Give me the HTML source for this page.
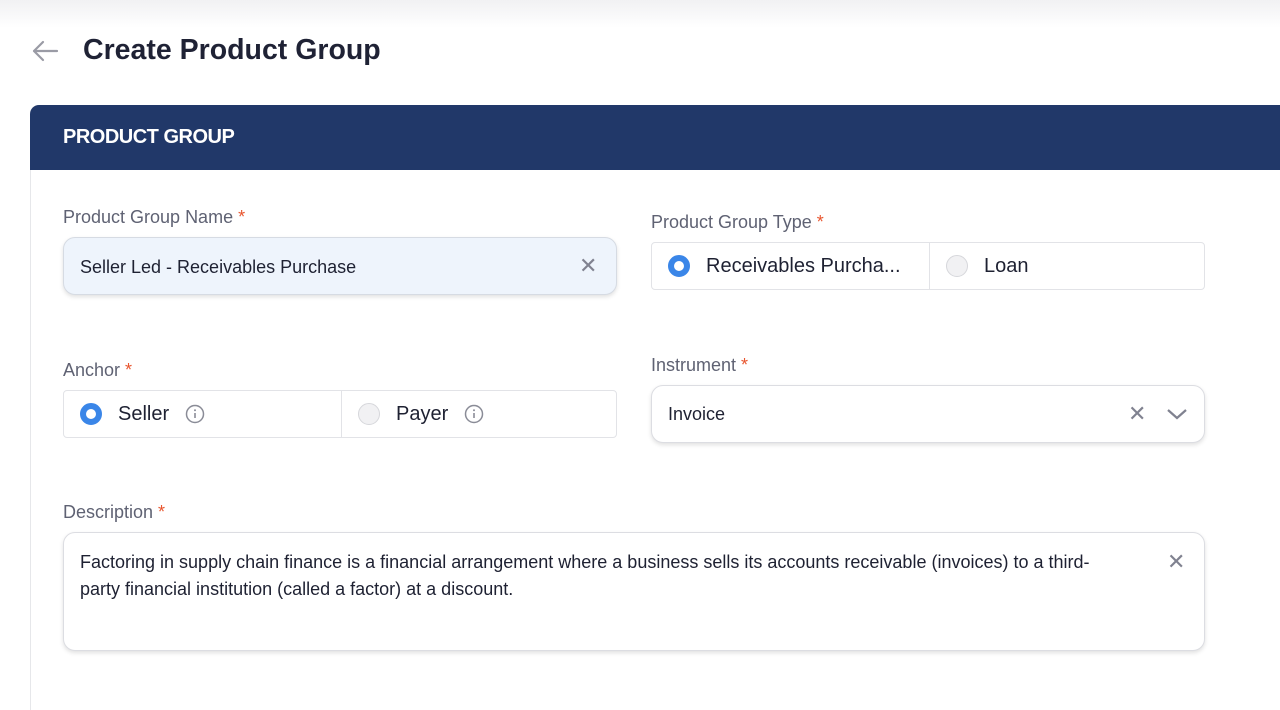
<!DOCTYPE html>
<html><head><style>
*{box-sizing:border-box;margin:0;padding:0}
body{width:1280px;height:708px;overflow:hidden;background:#fff;font-family:"Liberation Sans",sans-serif;position:relative;color:#1e2132}
.top{position:absolute;left:0;top:0;width:1280px;height:28px;background:linear-gradient(#f1f1f3,#fff)}
.abs{position:absolute}
.lbl{position:absolute;font-size:18px;color:#5f6273}
.lbl b{color:#e8552e;font-weight:normal}
.inp{position:absolute;border:1px solid #dcdde2;border-radius:12px;box-shadow:0 2px 4px rgba(0,0,0,.12);background:#fff;font-size:18px;color:#1e2132}
.grp{position:absolute;border:1px solid #e2e3e7;border-radius:4px;display:flex;background:#fff}
.grp>div{flex:1;display:flex;align-items:center;font-size:20px;color:#1e2132;position:relative}
.grp>div+div{border-left:1px solid #e2e3e7}
.on{width:22px;height:22px;border-radius:50%;border:6px solid #3a86e8;background:#fff;margin:0 16px 0 16px}
.off{width:22px;height:22px;border-radius:50%;border:1px solid #d6d7db;background:#f1f1f3;margin:0 16px 0 16px}
.x{position:absolute;color:#808290;font-size:22px}
</style></head><body>
<div class="top"></div>
<svg class="abs" style="left:30px;top:38px" width="30" height="26" viewBox="0 0 30 26"><path d="M27 13H4M13 4L4 13l9 9" fill="none" stroke="#9a9ba5" stroke-width="2.2" stroke-linecap="round" stroke-linejoin="round"/></svg>
<div class="abs" style="left:83px;top:34px;font-size:28.5px;font-weight:bold;color:#1f2235">Create Product Group</div>
<div class="abs" style="left:30px;top:170px;width:1px;height:540px;background:#e6e7ea"></div>
<div class="abs" style="left:30px;top:105px;width:1260px;height:65px;background:#213869;border-radius:9px 0 0 0"></div>
<div class="abs" style="left:63px;top:126px;font-size:20px;font-weight:bold;color:#fff;letter-spacing:-0.5px">PRODUCT GROUP</div>

<div class="lbl" style="left:63px;top:207px">Product Group Name <b>*</b></div>
<div class="inp" style="left:63px;top:237px;width:554px;height:58px;background:#eef4fc;border-color:#d6dbe3">
<span class="abs" style="left:16px;top:19px">Seller Led - Receivables Purchase</span><span class="x" style="left:515px;top:15px">✕</span></div>

<div class="lbl" style="left:651px;top:212px">Product Group Type <b>*</b></div>
<div class="grp" style="left:651px;top:242px;width:554px;height:48px">
<div style="flex:0 0 277px"><span class="on"></span>Receivables Purcha...</div><div><span class="off"></span>Loan</div></div>

<div class="lbl" style="left:63px;top:360px">Anchor <b>*</b></div>
<div class="grp" style="left:63px;top:390px;width:554px;height:48px">
<div style="flex:0 0 277px"><span class="on"></span>Seller<svg style="margin-left:16px" width="20" height="20" viewBox="0 0 20 20"><circle cx="10" cy="10" r="8.5" fill="none" stroke="#8a8c97" stroke-width="1.5"/><path d="M10 9v5" stroke="#8a8c97" stroke-width="1.6"/><circle cx="10" cy="6.3" r="1" fill="#8a8c97"/></svg></div>
<div><span class="off"></span>Payer<svg style="margin-left:16px" width="20" height="20" viewBox="0 0 20 20"><circle cx="10" cy="10" r="8.5" fill="none" stroke="#8a8c97" stroke-width="1.5"/><path d="M10 9v5" stroke="#8a8c97" stroke-width="1.6"/><circle cx="10" cy="6.3" r="1" fill="#8a8c97"/></svg></div></div>

<div class="lbl" style="left:651px;top:355px">Instrument <b>*</b></div>
<div class="inp" style="left:651px;top:385px;width:554px;height:58px">
<span class="abs" style="left:16px;top:18px">Invoice</span><span class="x" style="left:476px;top:15px">✕</span>
<svg class="abs" style="left:514px;top:20px" width="22" height="16" viewBox="0 0 22 16"><path d="M2 4l9 8 9-8" fill="none" stroke="#808290" stroke-width="2.2"/></svg></div>

<div class="lbl" style="left:63px;top:502px">Description <b>*</b></div>
<div class="inp" style="left:63px;top:532px;width:1142px;height:119px">
<div class="abs" style="left:16px;top:16px;width:1045px;line-height:27px;font-size:18px">Factoring in supply chain finance is a financial arrangement where a business sells its accounts receivable (invoices) to a third-party financial institution (called a factor) at a discount.</div>
<span class="x" style="left:1103px;top:16px">✕</span></div>
</body></html>
